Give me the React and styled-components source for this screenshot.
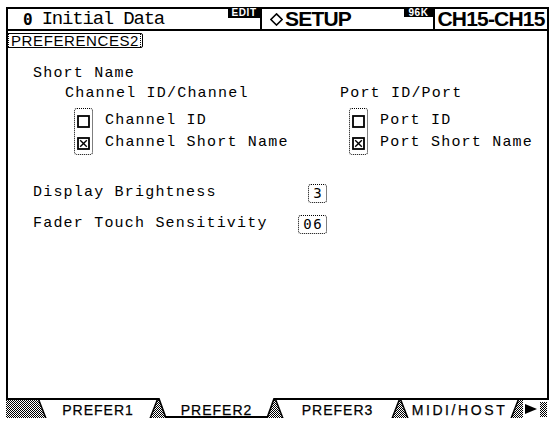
import React from 'react';
import styled, { createGlobalStyle, css } from 'styled-components';

const Global = createGlobalStyle`
  html, body { margin: 0; padding: 0; background: #fff; }
  body { width: 559px; height: 426px; overflow: hidden; }
`;

const LCD = `'Liberation Mono', 'DejaVu Sans Mono', monospace`;
const SANS = `'Liberation Sans', Arial, sans-serif`;

const DITHER =
  "url(\"data:image/svg+xml,%3Csvg xmlns='http://www.w3.org/2000/svg' width='2' height='2' shape-rendering='crispEdges'%3E%3Crect width='2' height='2' fill='%23fff'/%3E%3Crect width='1' height='1' fill='%23000'/%3E%3Crect x='1' y='1' width='1' height='1' fill='%23000'/%3E%3C/svg%3E\")";

const checker = css`
  background-color: #fff;
  background-image: ${DITHER};
  background-size: 2px 2px;
  image-rendering: pixelated;
`;

const Screen = styled.div`
  margin: 7px 0 0 6px;
  width: 543px;
  display: flex;
  flex-direction: column;
  color: #000;
`;

const Header = styled.header`
  display: flex;
  height: 20px;
  border: 2px solid #000;
`;

const TitleCell = styled.div`
  position: relative;
  width: 252px;
  display: flex;
  align-items: center;
  padding-left: 15px;
  box-sizing: border-box;
  font-family: ${LCD};
  font-size: 19px;
  letter-spacing: -1.2px;
  white-space: pre;
  b { font-family: 'DejaVu Sans Mono', monospace; font-size: 16px; font-weight: 700; }
`;

const Badge = styled.span`
  position: absolute;
  top: -2px;
  right: 0;
  width: ${p => p.$w}px;
  height: ${p => p.$h}px;
  background: #000;
  color: #fff;
  font-family: ${SANS};
  font-weight: 700;
  font-size: 10px;
  line-height: ${p => p.$h + 1}px;
  letter-spacing: 0.6px;
  text-align: center;
`;

const SetupCell = styled.div`
  position: relative;
  width: 173px;
  box-sizing: border-box;
  border-left: 2px solid #000;
  display: flex;
  align-items: center;
  gap: 2px;
  padding-left: 8px;
  font-family: ${SANS};
  font-weight: 700;
  font-size: 21px;
  letter-spacing: -0.8px;
`;

const ChannelCell = styled.div`
  flex: 1;
  border-left: 2px solid #000;
  display: flex;
  align-items: center;
  justify-content: center;
  font-family: ${SANS};
  font-weight: 700;
  font-size: 21px;
  letter-spacing: -0.8px;
`;

const Panel = styled.main`
  height: 367px;
  box-sizing: border-box;
  border-left: 2px solid #000;
  border-right: 2px solid #000;
  padding: 2px 0 0 25px;
  display: flex;
  flex-direction: column;
  font-family: ${LCD};
  font-size: 15px;
  letter-spacing: 1.2px;
  line-height: 20px;
`;

const PageLabel = styled.div`
  align-self: flex-start;
  margin-left: -27px;
  display: flex;
  border: 1px solid #000;
  border-radius: 2px;
  padding: 0 1px;
  font-family: ${SANS};
  font-size: 15px;
  letter-spacing: 0.6px;
  line-height: 13px;
`;

const PageLabelText = styled.span`
  border-left: 1px dotted #000;
  border-right: 1px dotted #000;
  padding: 0 1px 0 2px;
`;

const Heading = styled.div`
  margin-top: ${p => p.$top || 0}px;
`;

const Columns = styled.div`
  display: grid;
  grid-template-columns: 275px 1fr;
  margin-left: 32px;
`;

const Column = styled.div`
  display: flex;
  flex-direction: column;
`;

const Options = styled.div`
  display: flex;
  margin: 4px 0 0 9px;
`;

const CursorBox = styled.div`
  display: flex;
  flex-direction: column;
  border: 1px dotted #000;
  border-radius: 3px;
  padding: 1px 2px 0;
`;

const CheckCell = styled.div`
  height: 22px;
  display: flex;
  align-items: center;
`;

const OptionLabels = styled.div`
  display: flex;
  flex-direction: column;
  margin-left: 12px;
  padding-top: 2px;
  line-height: 22px;
  white-space: pre;
`;

const Settings = styled.div`
  display: grid;
  grid-template-columns: 264px 30px;
  row-gap: 11px;
  margin-top: 28px;
  align-items: center;
  justify-items: start;
`;

const Value = styled.span`
  justify-self: end;
  height: 19px;
  box-sizing: border-box;
  line-height: 17px;
  border: 1px dotted #000;
  border-radius: 3px;
  padding: 0 3px 0 4px;
  font-family: 'DejaVu Sans Mono', monospace;
  font-size: 14px;
  letter-spacing: 1.4px;
`;

const TabBar = styled.nav`
  display: flex;
  height: 18px;
  border-top: 2px solid #000;
  ${checker};
`;

const Spacer = styled.div`
  flex: 0 0 ${p => p.$w}px;
`;

const Tab = styled.div`
  position: relative;
  flex: 0 0 ${p => p.$w}px;
  height: ${p => (p.$active ? 20 : 18)}px;
  margin-top: ${p => (p.$active ? -2 : 0)}px;
  background: #000;
  clip-path: polygon(0 0, 100% 0, calc(100% - 7px) 100%, 7px 100%);
  display: flex;
  justify-content: center;
  box-sizing: border-box;
  padding-top: ${p => (p.$active ? 5 : 3)}px;
  &::before {
    content: '';
    position: absolute;
    inset: 0;
    background: #fff;
    clip-path: ${p =>
      p.$active
        ? 'polygon(1.6px 0, calc(100% - 1.6px) 0, calc(100% - 8.1px) calc(100% - 2px), 8.1px calc(100% - 2px))'
        : 'polygon(1.6px 0, calc(100% - 1.6px) 0, calc(100% - 8.6px) 100%, 8.6px 100%)'};
  }
`;

const TabText = styled.span`
  position: relative;
  font-family: ${SANS};
  font-size: 14px;
  line-height: 14px;
  letter-spacing: ${p => p.$spacing}px;
  height: 14px;
  -webkit-text-stroke: 0.25px #000;
`;

const EndCap = styled.div`
  flex: 1;
  margin-left: 4px;
  background: #fff;
  display: flex;
  align-items: center;
  padding-left: 2px;
`;

const EndBar = styled.div`
  width: 7px;
  height: 15px;
  margin-left: 3px;
  ${checker};
`;

const Diamond = () => (
  <svg width="13" height="13" viewBox="0 0 13 13">
    <polygon points="6.5,0.9 12.1,6.5 6.5,12.1 0.9,6.5" fill="none" stroke="#000" strokeWidth="1.5" />
  </svg>
);

const CheckBox = ({ checked }) => (
  <svg width="13" height="13" viewBox="0 0 13 13">
    <rect x="1" y="1" width="11" height="11" fill="none" stroke="#000" strokeWidth="1.8" />
    {checked && (
      <g stroke="#000" strokeWidth="1.4">
        <line x1="3.2" y1="3.2" x2="9.8" y2="9.8" />
        <line x1="9.8" y1="3.2" x2="3.2" y2="9.8" />
      </g>
    )}
  </svg>
);

const OptionGroup = ({ heading, items }) => (
  <Column>
    <Heading>{heading}</Heading>
    <Options>
      <CursorBox>
        {items.map(it => (
          <CheckCell key={it.label}>
            <CheckBox checked={it.checked} />
          </CheckCell>
        ))}
      </CursorBox>
      <OptionLabels>
        {items.map(it => (
          <span key={it.label}>{it.label}</span>
        ))}
      </OptionLabels>
    </Options>
  </Column>
);

const tabs = [
  { label: 'PREFER1', w: 120, spacing: 1 },
  { label: 'PREFER2', w: 117, spacing: 1, active: true },
  { label: 'PREFER3', w: 125, spacing: 1 },
  { label: 'MIDI/HOST', w: 119, spacing: 2.6 },
];

export default function App() {
  return (
    <>
      <Global />
      <Screen>
        <Header>
          <TitleCell>
            <b>0</b>{' Initial Data'}
            <Badge $w={32} $h={11}>EDIT</Badge>
          </TitleCell>
          <SetupCell>
            <Diamond />
            <span>SETUP</span>
            <Badge $w={29} $h={10}>96K</Badge>
          </SetupCell>
          <ChannelCell>CH15-CH15</ChannelCell>
        </Header>
        <Panel>
          <PageLabel>
            <PageLabelText>PREFERENCES2</PageLabelText>
          </PageLabel>
          <Heading $top={16}>Short Name</Heading>
          <Columns>
            <OptionGroup
              heading="Channel ID/Channel"
              items={[
                { label: 'Channel ID', checked: false },
                { label: 'Channel Short Name', checked: true },
              ]}
            />
            <OptionGroup
              heading="Port ID/Port"
              items={[
                { label: 'Port ID', checked: false },
                { label: 'Port Short Name', checked: true },
              ]}
            />
          </Columns>
          <Settings>
            <span>Display Brightness</span>
            <Value>3</Value>
            <span>Fader Touch Sensitivity</span>
            <Value>06</Value>
          </Settings>
        </Panel>
        <TabBar>
          <Spacer $w={32} />
          {tabs.map(t => (
            <Tab key={t.label} $w={t.w} $active={t.active}>
              <TabText $spacing={t.spacing}>{t.label}</TabText>
            </Tab>
          ))}
          <EndCap>
            <svg width="12" height="10" viewBox="0 0 12 10">
              <polygon points="0,0 12,5 0,10" fill="#000" />
            </svg>
            <EndBar />
          </EndCap>
        </TabBar>
      </Screen>
    </>
  );
}
